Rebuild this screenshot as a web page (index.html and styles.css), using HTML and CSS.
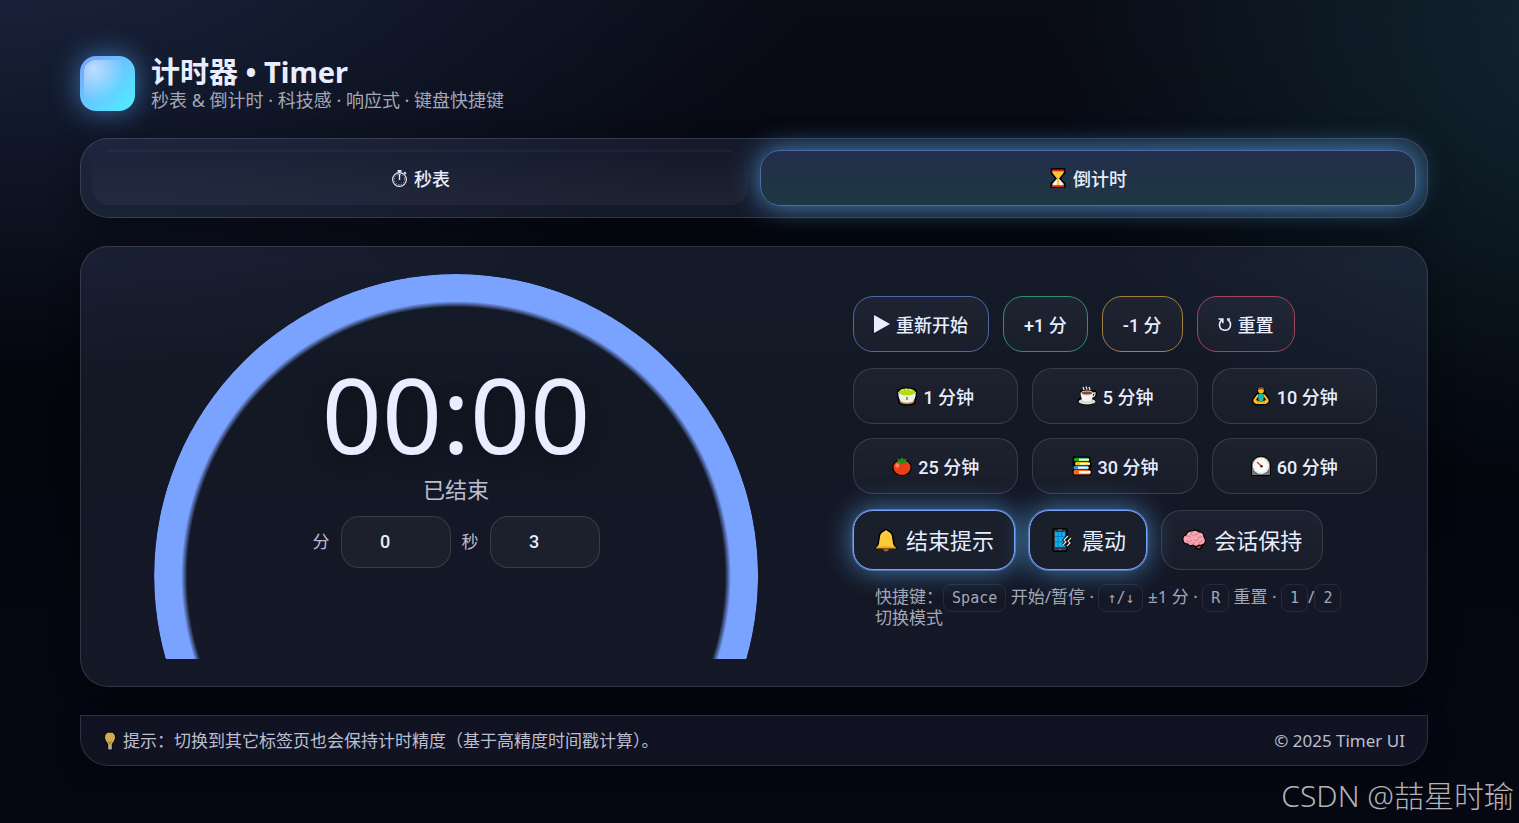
FILE: index.html
```html
<!DOCTYPE html>
<html lang="zh-CN">
<head>
<meta charset="utf-8">
<meta name="viewport" content="width=device-width, initial-scale=1">
<title>计时器 • Timer</title>
<link rel="stylesheet" href="styles.css">
</head>
<body>
<div class="app">
  <header class="header">
    <div class="logo" aria-hidden="true"></div>
    <div>
      <h1 class="title">计时器 • Timer</h1>
      <p class="subtitle">秒表 &amp; 倒计时 · 科技感 · 响应式 · 键盘快捷键</p>
    </div>
  </header>

  <nav class="tabs">
    <button class="tab" type="button">
      <svg class="icon" viewBox="0 0 20 20" fill="none" stroke="#e8eeff" aria-hidden="true"><circle cx="9.500" cy="11.500" r="6.900" stroke-width="1.100"/><circle cx="9.500" cy="11.500" r="5.200" stroke-dasharray="1 1.720" stroke-width=".9"/><path d="M9.500 6v6" stroke-width="1.400"/><path d="M7.500 2.900h4M9.500 2.900v2M14.300 4.200l1.600 1.600" stroke-width="1.800"/></svg>
      <span>秒表</span>
    </button>
    <button class="tab tab-active" type="button">
      <svg class="icon" viewBox="0 0 20 20" aria-hidden="true"><path d="M2.500 1h13v4L11 10.500l4.500 5v4h-13v-4l4.500-5L2.500 5z" fill="#f7f3ea" stroke="#000" stroke-width="1.800" stroke-linejoin="round"/><path d="M4 4h10v1.500L10 10v6.500l1.500 1h-5l1.500-1V10L4 5.500z" fill="#ffc02d"/><path d="M2.800 1.500h12.400v2H2.800zM2.800 17.200h12.400v2H2.800z" fill="#d6260b"/></svg>
      <span>倒计时</span>
    </button>
  </nav>

  <main class="card">
    <section class="dial">
      <div class="ring" aria-hidden="true"></div>
      <div class="readout">
        <div class="time">00:00</div>
        <div class="status">已结束</div>
        <div class="fields">
          <label for="minutes">分</label>
          <input class="field" id="minutes" type="number" min="0" value="0">
          <label for="seconds">秒</label>
          <input class="field" id="seconds" type="number" min="0" max="59" value="3">
        </div>
      </div>
    </section>

    <section class="panel">
      <div class="row">
        <button class="btn btn-primary" type="button"><svg class="icon icon-play" viewBox="0 0 16 20" aria-hidden="true"><path d="M0 1l16 9-16 9z" fill="#e8eeff"/></svg><span>重新开始</span></button>
        <button class="btn btn-ok" type="button">+1 分</button>
        <button class="btn btn-warn" type="button">-1 分</button>
        <button class="btn btn-danger" type="button"><svg class="icon icon-reset" viewBox="0 0 14 20" fill="none" stroke="#e8eeff" stroke-width="1.600" aria-hidden="true"><path d="M.500 5h4.300v4.300M4.500 5.500C0 8.500.500 16.200 6.800 16.200 13.500 16.200 14.200 8.300 9.300 5.200"/><path d="M9 5h3.200" stroke-width="1.400"/></svg><span>重置</span></button>
      </div>

      <div class="presets">
        <button class="btn" type="button"><svg class="icon" viewBox="0 0 20 20" aria-hidden="true"><path d="M1 4q9-4 18 0v6l-1 5v2q-8 4-16 0v-2l-1-5z" fill="#000" stroke="#000" stroke-width="1.500"/><path d="M2.200 14q7.800 4 15.600 0l-1.300 3q-6.500 2.500-13 0z" fill="#c58254"/><path d="M1.200 6h17.600q0 8-4 10-4.800 1.500-9.600 0-4-2-4-10z" fill="#eef0ec"/><ellipse cx="10" cy="6" rx="8.300" ry="3.600" fill="#b7db12"/><path d="M5 3l1 2M9 2.500l1 2M13 3l1 2" stroke="#eaf5a9"/><path d="M10 11v3" stroke="#76a82f" stroke-width="1.800"/></svg><span>1 分钟</span></button>
        <button class="btn" type="button"><svg class="icon" viewBox="0 0 20 20" aria-hidden="true"><path d="M4 5h13q3 0 2 4l-3 3 2 3q-3 4-8 4T1 16l1-3 2-1z" fill="#000" stroke="#000" stroke-width="1.500"/><ellipse cx="10" cy="15.500" rx="8.500" ry="3" fill="#d9dadb"/><path d="M3.500 7h12.800q-.5 7-3.300 8H7q-3-1-3.500-8z" fill="#f4f4f2"/><ellipse cx="9.900" cy="7" rx="5.800" ry="2" fill="#8c452f" stroke="#d8d8d8"/><path d="M16 7h2q0 4-3 4M6 1l1 3M9 .500l1 3M12 1l1 3" fill="none" stroke="#e0e0df" stroke-width="1.300"/></svg><span>5 分钟</span></button>
        <button class="btn" type="button"><svg class="icon" viewBox="0 0 20 20" aria-hidden="true"><path d="M7.500 3q2.500-3.500 5 0l1 4 4 5.500 1 3-3 3H4.500l-3-3 1-3 4-5.500z" fill="#000" stroke="#000" stroke-width="1.500"/><path d="M6.500 8L2.500 13.500q-1 3 3 4.500h9q4-1.500 3-4.500L13.500 8l-1 2 2.500 4-5 2-5-2 2.500-4z" fill="#ffb91d"/><path d="M7 8.500l2-1h2l2 1-.5 6q-2.500 1.500-5 0z" fill="#18b9a6"/><circle cx="10" cy="4.500" r="2.900" fill="#ffb91d"/><path d="M7 4q0-3 3-3t3 3l-2-.8H9z" fill="#8a4c24"/><path d="M6 16.500l4-1.500 4 1.500" fill="none" stroke="#dc8614"/></svg><span>10 分钟</span></button>
        <button class="btn" type="button"><svg class="icon" viewBox="0 0 20 20" aria-hidden="true"><ellipse cx="10" cy="11.500" rx="9.200" ry="8" fill="#ed3d17" stroke="#000" stroke-width="1.200"/><path d="M10 1l1.300 2.200L15 3l-1.500 2 2.500 2-4-.5-2 2-2-2L4 7l2.500-2L5 3l3.700.2z" fill="#16921c"/><ellipse cx="5.300" cy="9.500" rx="2" ry="2.200" fill="#ff8054"/></svg><span>25 分钟</span></button>
        <button class="btn" type="button"><svg class="icon" viewBox="0 0 20 20" aria-hidden="true"><path d="M1 1h17v5l1 1v4l-1 1v1h1v6H2l-1.500-3L2 12 1 9z" fill="#000" stroke="#000"/><rect x="2" y="1.700" width="15" height="3.800" rx="1.500" fill="#16a823"/><path d="M7 2.700h10v2H7z" fill="#fff"/><rect x="3" y="6" width="15" height="3.300" rx="1.500" fill="#ffbd18"/><path d="M8 7h10v1.500H8z" fill="#fff"/><rect x="1.500" y="9.800" width="15" height="3.700" rx="1.500" fill="#2795e9"/><path d="M6 10.700h10.500v2H6z" fill="#fff"/><rect x="1.500" y="14" width="17" height="4.500" rx="1.500" fill="#ff6812"/><path d="M7 15h11.500v2.500H7z" fill="#fff"/></svg><span>30 分钟</span></button>
        <button class="btn" type="button"><svg class="icon" viewBox="0 0 20 20" aria-hidden="true"><path d="M.500 19.500V9a9.500 8.800 0 0 1 19 0v10.500z" fill="#777" stroke="#000"/><circle cx="10" cy="9.800" r="8.200" fill="#fafafa"/><circle cx="10" cy="9.800" r="6.800" fill="none" stroke="#b5b5b5" stroke-dasharray=".8 2.760"/><path d="M6 6l4 3.800" stroke="#e34220" stroke-width="1.500"/><circle cx="10.500" cy="10.200" r="1.200" fill="#222"/></svg><span>60 分钟</span></button>
      </div>

      <div class="row">
        <button class="btn chip chip-on" type="button" aria-pressed="true"><svg class="icon icon-lg" viewBox="0 0 24 24" aria-hidden="true"><path d="M10 2.500q2-2 4 0 5 2 5 8 0 5 3 9.500H2q3-4.500 3-9.500 0-6 5-8z" fill="#ffca3a" stroke="#000" stroke-width="1.500"/><path d="M2.800 18.500h18.400l1 2H1.800z" fill="#efa614"/><path d="M9 21h6q-1 2.500-3 2.500T9 21z" fill="#b95b24"/></svg><span>结束提示</span></button>
        <button class="btn chip chip-on" type="button" aria-pressed="true"><svg class="icon icon-lg" viewBox="0 0 24 24" aria-hidden="true"><rect x="3" y=".800" width="14" height="22.500" rx="1.500" fill="#373c42" stroke="#000" stroke-width="1.500"/><path d="M5 4h10v15H5z" fill="#12aef1"/><path d="M5 8.500h10M8 4v15M11.500 4v5M5 14h10" stroke="#087fb9"/><path d="M8 2h4M9 21.500h2" stroke="#777"/><path d="M18 8l-4 4 2 2-3 3M21 10l-3 3 2 2-3 3" fill="none" stroke="#000" stroke-width="3"/><path d="M18 8l-4 4 2 2-3 3M21 10l-3 3 2 2-3 3" fill="none" stroke="#e8e8e8" stroke-width="1.200"/></svg><span>震动</span></button>
        <button class="btn chip" type="button" aria-pressed="false"><svg class="icon icon-lg" viewBox="0 0 24 24" aria-hidden="true"><path d="M13 18q2 4 5 3l3-4z" fill="#e7384d" stroke="#000" stroke-width="1.500"/><path d="M1 12q-1-4 3-5 1-4 6-4 4-2 7 1 5 0 5 5 3 4 0 7-2 2-5 1-3 3-6 0-3 2-5-1-5 0-5-4z" fill="#f6a5b2" stroke="#000" stroke-width="1.200"/><path d="M4 8q4-1 4 2M10 4q-2 3 1 4M16 5q-1 3-4 2M20 9q-4-1-4 2t-4 1M4 13q4 2 6-1M9 16q3 1 4-2M16 15q3 0 4-3" fill="none" stroke="#d8788a"/></svg><span>会话保持</span></button>
      </div>

      <p class="hint">快捷键：<kbd>Space</kbd> 开始/暂停 · <kbd>↑/↓</kbd> ±1 分 · <kbd>R</kbd> 重置 · <kbd>1</kbd>/<kbd>2</kbd> 切换模式</p>
    </section>
  </main>

  <footer class="footer">
    <div class="tip"><svg class="icon icon-bulb" viewBox="0 0 14 20" aria-hidden="true"><path d="M7 1q-5.500 0-5.500 5.500 0 3 2.500 5.500l1 2v4.500h4V14l1-2q2.500-2.500 2.500-5.500Q12.500 1 7 1z" fill="#d2a955" stroke="#000"/><path d="M5.300 14h3.400v4.500H5.300z" fill="#aaa"/><path d="M5.500 10L7 13l1.500-3" fill="none" stroke="#b57a15"/></svg><span>提示：切换到其它标签页也会保持计时精度（基于高精度时间戳计算）。</span></div>
    <div>© 2025 Timer UI</div>
  </footer>
</div>
<div class="watermark">CSDN @喆星时瑜</div>
</body>
</html>
```

FILE: styles.css
```css
:root {
  --text: #e8eeff;
  --muted: #a2a8b7;
  --primary: #7aa2ff;
  --line: rgba(255, 255, 255, .13);
  --sans: "Noto Sans", "Noto Sans CJK SC", sans-serif;
  --ui: Roboto, "Noto Sans CJK SC", sans-serif;
}

* { box-sizing: border-box; }

body {
  margin: 0;
  min-height: 100vh;
  color: var(--text);
  font: 17px/21px var(--sans);
  background:
    radial-gradient(1100px 600px at 0% -10%, rgba(110, 160, 255, .18), transparent 75%),
    radial-gradient(800px 600px at 108% 5%, rgba(79, 220, 230, .14), transparent 75%),
    linear-gradient(#090b16, #04060e 50%, #050712);
}

h1, p { margin: 0; }
button, input { font-family: var(--ui); color: inherit; }
button { cursor: pointer; }

.app {
  display: flex;
  flex-direction: column;
  gap: 28px;
  padding: 54px 91px 57px 80px;
}

.header { display: flex; align-items: center; gap: 16px; margin-bottom: -2px; }

.logo {
  position: relative;
  width: 55px;
  height: 55px;
  border-radius: 16px;
  background: linear-gradient(135deg, #7aa2ff, #4ff0ff);
  box-shadow: 0 0 28px rgba(90, 170, 255, .6);
}
.logo::after {
  content: "";
  position: absolute;
  inset: 4px;
  border-radius: 12px;
  background: radial-gradient(circle at 20% 20%, rgba(255, 255, 255, .55), transparent 60%);
}

.title { padding-top: 2px; font-size: 29px; line-height: 32px; font-weight: 700; }
.subtitle { color: var(--muted); font-size: 18px; line-height: 24px; }

.tabs {
  display: grid;
  grid-template-columns: 1fr 1fr;
  gap: 12px;
  padding: 11px;
  border: 1px solid var(--line);
  border-radius: 28px;
  background: rgba(150, 180, 255, .1);
  box-shadow: 0 10px 28px rgba(0, 0, 0, .35);
}

.tab, .btn {
  display: inline-flex;
  align-items: center;
  justify-content: center;
  gap: 6px;
  height: 56px;
  padding: 0 20px;
  border: 1px solid var(--line);
  border-radius: 20px;
  background: linear-gradient(rgba(255, 255, 255, .045), rgba(255, 255, 255, .025));
  font-size: 18px;
  font-weight: 500;
  white-space: nowrap;
}

.tab {
  gap: 4px;
  border-color: transparent;
  background: linear-gradient(transparent, rgba(255, 255, 255, .045));
  box-shadow: inset 0 1px rgba(255, 255, 255, .03);
}
.tab-active {
  border-color: #4c6dab;
  background: linear-gradient(#242e4b, #1d3743);
  box-shadow: 0 0 28px rgba(90, 175, 240, .75);
}

.icon { flex: none; width: 20px; height: 20px; }
.icon-play { width: 16px; }
.icon-reset { width: 14px; }
.icon-lg { width: 24px; height: 24px; }
.icon-bulb { width: 14px; }

.card {
  display: grid;
  grid-template-columns: 11fr 9fr;
  gap: 28px;
  padding: 27px 28px;
  border: 1px solid var(--line);
  border-radius: 28px;
  background: linear-gradient(rgba(160, 190, 255, .1), rgba(180, 190, 255, .095));
  box-shadow: 0 10px 28px rgba(0, 0, 0, .4);
}

.dial {
  position: relative;
  display: grid;
  place-items: center;
  overflow: hidden;
}
.ring {
  position: absolute;
  top: 0;
  left: 50%;
  width: 87%;
  aspect-ratio: 1;
  transform: translateX(-50%);
  border-radius: 50%;
  background: var(--primary);
  -webkit-mask: radial-gradient(closest-side, transparent 89%, #000 91%);
  mask: radial-gradient(closest-side, transparent 89%, #000 91%);
}
.readout {
  position: relative;
  display: flex;
  flex-direction: column;
  align-items: center;
  gap: 8px;
}
.time {
  padding-bottom: 4px;
  font-size: 105px;
  line-height: 96px;
  text-shadow: 0 4px 20px rgba(0, 0, 0, .4);
}
.status { padding-bottom: 4px; color: #b9bfd0; font-size: 22px; line-height: 30px; }
.fields { display: flex; align-items: center; gap: 11px; color: #b9bfd0; }
.field {
  width: 110px;
  height: 52px;
  padding: 0 18px 0 12px;
  border: 1px solid var(--line);
  border-radius: 18px;
  background: #1b202c;
  color: var(--text);
  font-size: 18px;
  font-weight: 500;
  text-align: center;
}

.panel {
  display: flex;
  flex-direction: column;
  gap: 16px;
  min-width: 0;
  padding: 22px 22px 31px;
}
.row { display: flex; flex-wrap: wrap; gap: 14px; }
.presets { display: grid; grid-template-columns: repeat(3, 1fr); gap: 14px; }

.btn-primary { border-color: #4c68a8; }
.btn-ok { border-color: #339068; }
.btn-warn { border-color: #a1833d; }
.btn-danger { border-color: #a14658; }

.chip {
  gap: 8px;
  height: 60px;
  font: 22px/30px var(--sans);
}
.chip-on {
  border-color: var(--primary);
  background: #1a1f2c;
  box-shadow: 0 0 0 1px rgba(122, 162, 255, .5), 0 0 28px rgba(90, 175, 240, .7);
}

.hint { padding: 0 22px; color: var(--muted); }
kbd {
  padding: 4px 8px;
  border: 1px solid rgba(255, 255, 255, .08);
  border-radius: 8px;
  font: 15px/15px "DejaVu Sans Mono", monospace;
}

.footer {
  display: flex;
  align-items: center;
  justify-content: space-between;
  padding: 14px 22px;
  border: 1px solid var(--line);
  border-radius: 0 0 28px 28px;
  background: rgba(170, 180, 255, .075);
  color: #b9bfd0;
  box-shadow: 0 10px 28px rgba(0, 0, 0, .3);
}
.tip { display: flex; align-items: center; gap: 6px; }

.watermark {
  position: absolute;
  right: 5px;
  bottom: 8px;
  color: #b2b2b4;
  font: 300 30px/38px "Noto Sans", "Noto Sans CJK SC", sans-serif;
}
```
